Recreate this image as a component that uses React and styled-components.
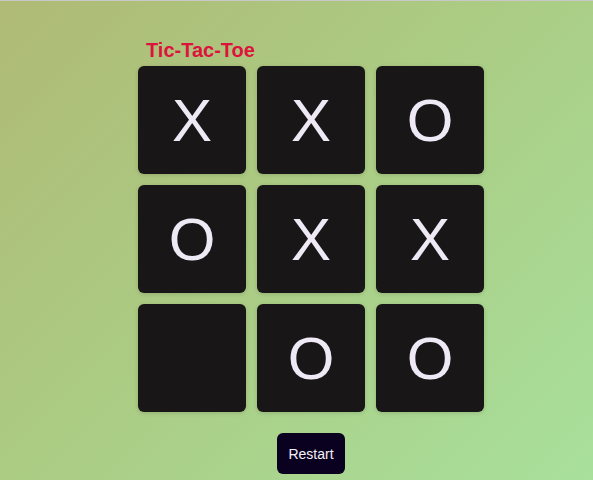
import React, { useState } from "react";
import styled, { createGlobalStyle } from "styled-components";

const GlobalStyle = createGlobalStyle`
  html, body {
    margin: 0;
    padding: 0;
    height: 100%;
  }
  body {
    font-family: "Liberation Sans", Arial, sans-serif;
    background: linear-gradient(135deg, #afba75 0%, #abcd85 50%, #a8e09c 100%);
    border-top: 1px solid #c8c8c8;
    box-sizing: border-box;
  }
`;

const Page = styled.div`
  display: flex;
  flex-direction: column;
  align-items: center;
  padding-left: 29px;
  height: 479px;
  box-sizing: border-box;
`;

const Game = styled.div`
  display: flex;
  flex-direction: column;
  align-items: flex-start;
`;

const Title = styled.h1`
  margin: 38px 0 4px 8px;
  font-size: 20px;
  font-weight: bold;
  line-height: 23px;
  color: #dc143c;
`;

const Board = styled.div`
  display: grid;
  grid-template-columns: repeat(3, 108px);
  grid-auto-rows: 108px;
  column-gap: 11px;
  row-gap: 11px;
`;

const Cell = styled.button`
  display: flex;
  align-items: center;
  justify-content: center;
  padding: 0;
  border: none;
  border-radius: 6px;
  background: #181617;
  box-shadow: 0 1px 4px rgba(0, 0, 0, 0.15);
  color: #efe9f6;
  font-family: "Liberation Sans", Arial, sans-serif;
  font-size: 60px;
  cursor: pointer;
`;

const Restart = styled.button`
  margin-top: 21px;
  width: 68px;
  height: 41px;
  border: none;
  border-radius: 6px;
  background: #0a0120;
  color: #f4f0f8;
  font-family: "Liberation Sans", Arial, sans-serif;
  font-size: 14px;
  cursor: pointer;
`;

const initial = ["X", "X", "O", "O", "X", "X", "", "O", "O"];

export default function App() {
  const [cells, setCells] = useState(initial);

  return (
    <>
      <GlobalStyle />
      <Page>
        <Game>
          <Title>Tic-Tac-Toe</Title>
          <Board>
            {cells.map((c, i) => (
              <Cell key={i}>{c}</Cell>
            ))}
          </Board>
        </Game>
        <Restart onClick={() => setCells(Array(9).fill(""))}>Restart</Restart>
      </Page>
    </>
  );
}
